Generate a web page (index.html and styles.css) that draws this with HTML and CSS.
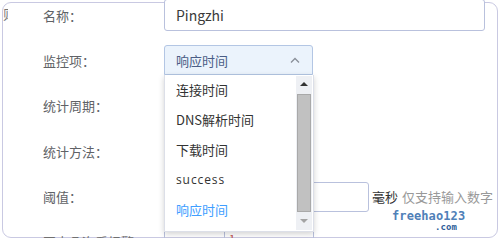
FILE: index.html
```html
<!DOCTYPE html>
<html lang="zh-CN">
<head>
    <meta charset="UTF-8">
    <title>监控设置</title>
    <link rel="stylesheet" href="styles.css">
</head>
<body>
    <span class="edge-text">则</span>
    <div class="card">
        <div class="form">
            <div class="row">
                <label class="label">名称<span class="colon">：</span></label>
                <div class="input input-name">Pingzhi</div>
            </div>
            <div class="row">
                <label class="label">监控项<span class="colon">：</span></label>
                <div class="select-wrap">
                    <div class="select">
                        <span>响应时间</span>
                        <svg class="chevron" width="10" height="6" viewBox="0 0 10 6"><path d="M1 5.5 L5 1.5 L9 5.5" fill="none" stroke="#8a8f99" stroke-width="1.3"/></svg>
                    </div>
                    <!-- open dropdown -->
                    <div class="dropdown">
                        <ul class="options">
                            <li>连接时间</li>
                            <li>DNS解析时间</li>
                            <li>下载时间</li>
                            <li class="latin">success</li>
                            <li class="selected">响应时间</li>
                        </ul>
                        <div class="scrollbar">
                            <span class="arrow-up"></span>
                            <span class="thumb"></span>
                            <span class="arrow-down"></span>
                        </div>
                    </div>
                </div>
            </div>
            <div class="row">
                <label class="label">统计周期<span class="colon">：</span></label>
            </div>
            <div class="row">
                <label class="label">统计方法<span class="colon">：</span></label>
            </div>
            <div class="row">
                <label class="label">阈值<span class="colon">：</span></label>
                <div class="input input-threshold"></div>
                <span class="unit">毫秒</span>
                <span class="hint">仅支持输入数字</span>
            </div>
            <div class="row row-last">
                <label class="label">至少几次后报警</label>
                <div class="number">
                    <span class="num-btn"></span>
                    <span class="num-mark">1</span>
                </div>
            </div>
        </div>
        <div class="watermark">freehao123<span class="wm-com">.com</span></div>
    </div>
</body>
</html>
```

FILE: styles.css
```css
body {
    margin: 0;
    background-color: #fff;
    font-family: "Noto Sans CJK SC", "Noto Sans", sans-serif;
    font-size: 13px;
    color: #333;
    overflow: hidden;
}
/* sliver of the neighbouring panel's text */
.edge-text {
    position: absolute;
    left: 3px;
    top: 5px;
    width: 5px;
    overflow: hidden;
    color: #777;
    font-size: 13px;
    line-height: 18px;
    z-index: 2;
}
.card {
    position: relative;
    margin: 2px 0 0 2px;
    width: 494px;
    height: 234px;
    border: 1px solid #c9c9e2;
    border-radius: 9px;
    overflow: visible;
}
.form {
    margin-top: -10.7px;
    padding-left: 40px;
}
.row {
    display: flex;
    align-items: center;
    height: 45.4px;
}
.row-last {
    margin-top: 8px;
    align-items: flex-start;
}
.label {
    width: 121px;
    flex-shrink: 0;
    color: #606266;
}
.colon {
    font-family: "Noto Sans CJK JP", sans-serif;
}
.row-last .label {
    padding-top: 5px;
    color: #707070;
}
.input {
    box-sizing: border-box;
    height: 30px;
    border: 1px solid #b9c1dd;
    border-radius: 3px;
    background-color: #fff;
    padding: 0 11px;
    display: flex;
    align-items: center;
}
.input-name {
    width: 321px;
    height: 32px;
    font-size: 14px;
    color: #3a3a3a;
}
.input-threshold {
    width: 205px;
}
.unit {
    margin-left: 3px;
    color: #333;
}
.hint {
    margin-left: 4px;
    color: #999;
}
/* select with open menu */
.select-wrap {
    position: relative;
}
.select {
    box-sizing: border-box;
    width: 149px;
    height: 30px;
    border: 1px solid #b3c6e4;
    border-radius: 3px 3px 0 0;
    background-color: #ebf3fc;
    padding: 0 11px;
    display: flex;
    align-items: center;
    justify-content: space-between;
    color: #4a5d86;
}
.chevron {
    margin-right: 1px;
}
.dropdown {
    position: absolute;
    left: 0;
    top: 30px;
    width: 150px;
    height: 157px;
    background-color: #fff;
    border: 1px solid #dcdfe8;
    border-top: none;
    box-sizing: border-box;
    box-shadow: 0 2px 6px rgba(0, 0, 0, 0.18);
    z-index: 3;
}
.options {
    list-style: none;
    margin: 0;
    padding: 0;
}
.options li {
    height: 30px;
    line-height: 30px;
    padding-left: 11px;
    color: #333;
}
.options .latin {
    letter-spacing: 0.9px;
    font-family: "Open Sans", sans-serif;
    font-size: 12px;
}
.options .selected {
    color: #409eff;
}
.scrollbar {
    position: absolute;
    top: 1px;
    right: 1px;
    bottom: 1px;
    width: 16px;
    background-color: #eef0f4;
    display: flex;
    flex-direction: column;
    align-items: center;
}
.arrow-up {
    margin-top: 6px;
    width: 0;
    height: 0;
    border-left: 4px solid transparent;
    border-right: 4px solid transparent;
    border-bottom: 4px solid #333;
}
.thumb {
    margin-top: 8px;
    box-sizing: border-box;
    width: 14px;
    height: 118px;
    background-color: #c1c1c1;
    border: 1px solid #a9a9a9;
}
.arrow-down {
    margin-top: 7px;
    width: 0;
    height: 0;
    border-left: 4px solid transparent;
    border-right: 4px solid transparent;
    border-top: 4px solid #a3a3a3;
}
.number {
    box-sizing: border-box;
    display: flex;
    width: 150px;
    height: 30px;
    border: 1px solid #b9c1dd;
    border-radius: 3px;
}
.num-btn {
    width: 59px;
    border-right: 1px solid #b9c1dd;
}
.num-mark {
    margin: 2px 0 0 4px;
    font-size: 11px;
    color: #c0504d;
}
.watermark {
    position: absolute;
    left: 389px;
    top: 206px;
    font-family: "DejaVu Sans Mono", monospace;
    font-weight: bold;
    font-size: 12px;
    color: #4f80b8;
    letter-spacing: 0.1px;
    line-height: 14px;
    z-index: 4;
}
.wm-com {
    display: block;
    margin-left: 43px;
    font-size: 9px;
    line-height: 9px;
    color: #2f5f9a;
}
```
